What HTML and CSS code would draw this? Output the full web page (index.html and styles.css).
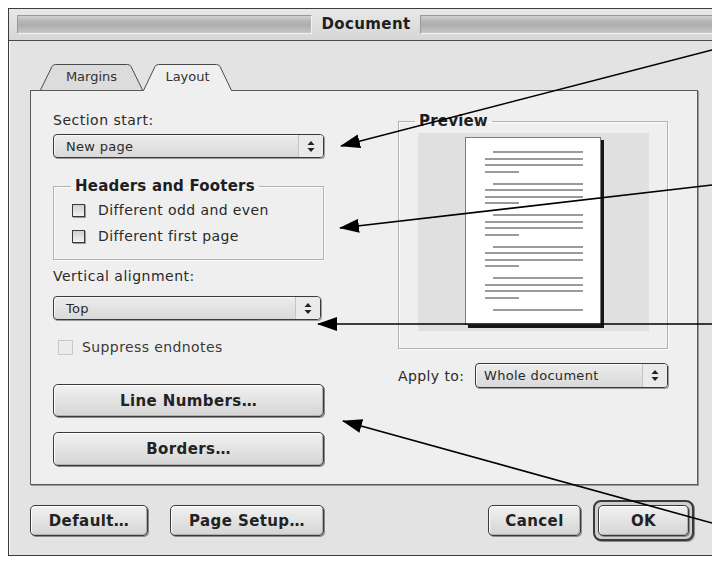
FILE: index.html
```html
<!DOCTYPE html>
<html>
<head>
<meta charset="utf-8">
<link rel="stylesheet" href="styles.css">
</head>
<body>
<div class="window">
  <div class="titlebar">
    <div class="stripes"></div>
    <div class="title">Document</div>
    <div class="stripes"></div>
  </div>
  <div class="content">
    <div class="tabs">
      <div class="tab tab-back">
        <svg class="tab-shape" width="103" height="27" viewBox="0 0 103 27">
          <path d="M0.5,26 L12,2.5 Q13,0.5 15.5,0.5 L87.5,0.5 Q90,0.5 91,2.5 L102.5,26 Z" fill="#dcdcdc"/>
          <path d="M0.5,26 L12,2.5 Q13,0.5 15.5,0.5 L87.5,0.5 Q90,0.5 91,2.5 L102.5,26" fill="none" stroke="#4a4a4a" stroke-width="1"/>
        </svg>
        <span class="tab-label">Margins</span>
      </div>
      <div class="tab tab-front">
        <svg class="tab-shape" width="89" height="27" viewBox="0 0 89 27">
          <path d="M0.5,27 L12,2.5 Q13,0.5 15.5,0.5 L73.5,0.5 Q76,0.5 77,2.5 L88.5,27 Z" fill="#efefef"/>
          <path d="M0.5,26.5 L12,2.5 Q13,0.5 15.5,0.5 L73.5,0.5 Q76,0.5 77,2.5 L88.5,26.5" fill="none" stroke="#4a4a4a" stroke-width="1"/>
        </svg>
        <span class="tab-label">Layout</span>
      </div>
    </div>
    <div class="panel">
      <div class="col-left">
        <div class="label">Section start:</div>
        <div class="popup popup-section">
          <span class="val">New page</span>
          <span class="arrows"><svg width="8" height="11" viewBox="0 0 8 11"><path d="M4,0 L7.5,4 L0.5,4 Z M4,11 L7.5,7 L0.5,7 Z" fill="#222"/></svg></span>
        </div>
        <fieldset class="group">
          <legend>Headers and Footers</legend>
          <div class="check"><span class="box"></span><span>Different odd and even</span></div>
          <div class="check second"><span class="box"></span><span>Different first page</span></div>
        </fieldset>
        <div class="label label-valign">Vertical alignment:</div>
        <div class="popup popup-valign">
          <span class="val">Top</span>
          <span class="arrows"><svg width="8" height="11" viewBox="0 0 8 11"><path d="M4,0 L7.5,4 L0.5,4 Z M4,11 L7.5,7 L0.5,7 Z" fill="#222"/></svg></span>
        </div>
        <div class="check disabled"><span class="box"></span><span>Suppress endnotes</span></div>
        <button class="btn btn-wide btn-line">Line Numbers…</button>
        <button class="btn btn-wide btn-borders">Borders…</button>
      </div>
      <div class="col-right">
        <fieldset class="preview">
          <legend>Preview</legend>
          <div class="preview-area">
            <div class="page">
              <div class="para"><i class="ln ind"></i><i class="ln"></i><i class="ln"></i><i class="ln short"></i></div>
              <div class="para"><i class="ln ind"></i><i class="ln"></i><i class="ln"></i><i class="ln short"></i></div>
              <div class="para"><i class="ln ind"></i><i class="ln"></i><i class="ln"></i><i class="ln short"></i></div>
              <div class="para"><i class="ln ind"></i><i class="ln"></i><i class="ln"></i><i class="ln short"></i></div>
              <div class="para"><i class="ln ind"></i><i class="ln"></i><i class="ln"></i><i class="ln short"></i></div>
              <div class="para"><i class="ln ind"></i></div>
            </div>
          </div>
        </fieldset>
        <div class="apply">
          <span class="apply-label">Apply to:</span>
          <div class="popup popup-apply">
            <span class="val">Whole document</span>
            <span class="arrows"><svg width="8" height="11" viewBox="0 0 8 11"><path d="M4,0 L7.5,4 L0.5,4 Z M4,11 L7.5,7 L0.5,7 Z" fill="#222"/></svg></span>
          </div>
        </div>
      </div>
    </div>
    <div class="footer">
      <button class="btn btn-default">Default…</button>
      <button class="btn btn-setup">Page Setup…</button>
      <div class="spacer"></div>
      <button class="btn btn-cancel">Cancel</button>
      <div class="ok-ring"><button class="btn btn-ok">OK</button></div>
    </div>
  </div>
</div>
<svg class="callouts" width="712" height="561" viewBox="0 0 712 561">
  <defs>
    <marker id="ah" markerUnits="userSpaceOnUse" markerWidth="20" markerHeight="14" refX="19" refY="7" orient="auto">
      <path d="M0,0 L20,7 L0,14 Z" fill="#000"/>
    </marker>
  </defs>
  <g stroke="#000" stroke-width="1.6" fill="none">
    <path d="M712,50 L341,146" marker-end="url(#ah)"/>
    <path d="M712,185 L340,228" marker-end="url(#ah)"/>
    <path d="M712,324 L318,324" marker-end="url(#ah)"/>
    <path d="M712,523 L343,421" marker-end="url(#ah)"/>
  </g>
</svg>
</body>
</html>
```

FILE: styles.css
```css
html, body {
  margin: 0;
  background: #ffffff;
}
body {
  width: 712px;
  height: 561px;
  box-sizing: border-box;
  padding: 8px 0 0 8px;
  position: relative;
  overflow: hidden;
  font-family: "DejaVu Sans", "Liberation Sans", sans-serif;
  color: #222;
}
.window {
  width: 716px;
  height: 548px;
  box-sizing: border-box;
  border: 1px solid #3c3c3c;
  background: #e3e3e3;
  box-shadow: inset 1px 1px 0 #f6f6f6;
}
.titlebar {
  height: 32px;
  box-sizing: border-box;
  border-bottom: 1px solid #4a4a4a;
  background: linear-gradient(#e8e8e8, #d6d6d6);
  display: flex;
  align-items: center;
  padding: 0 8px;
}
.stripes {
  flex: 1;
  height: 19px;
  box-sizing: border-box;
  border: 1px solid;
  border-color: #9a9a9a #f2f2f2 #f2f2f2 #9a9a9a;
  background: linear-gradient(#cfcfcf, #b3b3b3 35%, #aeaeae 55%, #c6c6c6);
}
.title {
  padding: 0 9px;
  font-weight: bold;
  font-size: 15px;
  letter-spacing: 0.4px;
  color: #1e1e1e;
  line-height: 19px;
}
.content {
  padding: 23px 0 0 21px;
}
.tabs {
  display: flex;
  height: 27px;
  margin-left: 10px;
  position: relative;
  z-index: 1;
}
.tab {
  position: relative;
  height: 27px;
  display: flex;
  align-items: center;
  justify-content: center;
}
.tab-shape {
  position: absolute;
  left: 0;
  top: 0;
  overflow: visible;
}
.tab-back { width: 103px; }
.tab-front { width: 89px; }
.tab-label {
  position: relative;
  font-size: 13px;
  color: #333;
  padding-bottom: 2px;
}
.panel {
  width: 668px;
  height: 395px;
  margin-top: -1px;
  box-sizing: border-box;
  border: 1px solid #5a5a5a;
  box-shadow: 1px 1px 0 #9a9a9a;
  background: #efefef;
  display: flex;
  gap: 74px;
  padding: 21px 0 0 22px;
}
.col-left {
  width: 271px;
  display: flex;
  flex-direction: column;
}
.col-right {
  width: 270px;
  display: flex;
  flex-direction: column;
}
.label {
  font-size: 14px;
  line-height: 16px;
  letter-spacing: 0.5px;
  color: #2a2a2a;
}
.popup {
  display: flex;
  align-items: stretch;
  height: 24px;
  box-sizing: border-box;
  border: 1px solid #3a3a3a;
  border-radius: 4px;
  background: linear-gradient(#ececec, #d9d9d9);
  box-shadow: 1px 1px 0 #9c9c9c, inset 1px 1px 0 #fafafa;
  font-size: 13px;
  letter-spacing: 0.3px;
  color: #2a2a2a;
}
.popup .val {
  flex: 1;
  display: flex;
  align-items: center;
  padding-left: 12px;
}
.popup .arrows {
  width: 24px;
  display: flex;
  align-items: center;
  justify-content: center;
  border-left: 1px solid #c4c4c4;
  background: #eaeaea;
  border-radius: 0 3px 3px 0;
}
.popup-section { margin-top: 6px; }
.popup-valign { margin-top: 12px; width: 268px; }
.group {
  margin: 19px 0 0 0;
  padding: 7px 0 15px 18px;
  border: 1px solid #b2b2b2;
  box-shadow: 1px 1px 0 #fbfbfb, inset 1px 1px 0 #fbfbfb;
  min-width: 0;
}
.group legend, .preview legend {
  font-weight: bold;
  font-size: 15px;
  line-height: 18px;
  letter-spacing: 0.2px;
  padding: 0 4px;
  margin-left: -1px;
  color: #1e1e1e;
}
.check {
  display: flex;
  align-items: center;
  height: 16px;
  font-size: 14px;
  letter-spacing: 0.4px;
  color: #2a2a2a;
}
.check .box {
  width: 13px;
  height: 13px;
  box-sizing: border-box;
  border: 1px solid #3a3a3a;
  background: linear-gradient(#d0d0d0, #f2f2f2);
  box-shadow: 1px 1px 0 #9a9a9a;
  margin-right: 13px;
}
.check.second { margin-top: 10px; }
.check.disabled {
  margin-top: 19px;
  padding-left: 5px;
  color: #3a3a3a;
}
.check.disabled .box {
  width: 15px;
  height: 15px;
  border-color: #c8c8c8;
  background: #ececec;
  box-shadow: none;
  margin-right: 9px;
}
.label-valign { margin-top: 8px; }
.btn {
  box-sizing: border-box;
  border: 1px solid #3a3a3a;
  border-radius: 5px;
  background: linear-gradient(#f1f1f1, #d5d5d5);
  box-shadow: inset 1px 1px 0 #ffffff, inset -1px -1px 0 #b0b0b0, 1px 1px 0 #8a8a8a;
  font-family: "DejaVu Sans", sans-serif;
  font-weight: bold;
  font-size: 15px;
  letter-spacing: 0.4px;
  color: #222;
  padding: 0;
}
.btn-wide {
  width: 271px;
  height: 33px;
}
.btn-line { margin-top: 29px; }
.btn-borders { margin-top: 15px; height: 34px; }
.preview {
  margin: 0;
  padding: 3px 0 17px 19px;
  border: 1px solid #b2b2b2;
  box-shadow: 1px 1px 0 #fbfbfb, inset 1px 1px 0 #fbfbfb;
  min-width: 0;
}
.preview legend {
  margin-left: -3px;
}
.preview-area {
  width: 231px;
  height: 198px;
  background: #e0e0e0;
  padding: 4px 0 0 47px;
  box-sizing: border-box;
}
.page {
  width: 136px;
  height: 188px;
  box-sizing: border-box;
  background: #ffffff;
  border: 1px solid #7a7a7a;
  box-shadow: 3px 3px 0 #161616;
  padding: 13px 0 0 19px;
  display: flex;
  flex-direction: column;
  gap: 10px;
}
.para {
  display: flex;
  flex-direction: column;
  gap: 4.5px;
}
.ln {
  display: block;
  width: 98px;
  height: 2px;
  background: #9a9a9a;
}
.ln.ind {
  width: 90px;
  margin-left: 8px;
}
.ln.short { width: 34px; }
.apply {
  display: flex;
  align-items: center;
  margin-top: 14px;
}
.apply-label {
  font-size: 14px;
  letter-spacing: 0.4px;
  color: #2a2a2a;
  width: 77px;
}
.popup-apply {
  width: 193px;
  height: 25px;
}
.popup-apply .val { padding-left: 8px; }
.footer {
  display: flex;
  align-items: center;
  width: 664px;
  margin-top: 15px;
}
.btn-default { width: 118px; height: 31px; }
.btn-setup { width: 154px; height: 31px; margin-left: 22px; }
.spacer { flex: 1; }
.btn-cancel { width: 93px; height: 31px; }
.ok-ring {
  margin-left: 12px;
  padding: 3px;
  border: 2px solid #3a3a3a;
  border-radius: 8px;
  background: #cfcfcf;
  box-shadow: 1px 1px 0 #8a8a8a;
}
.btn-ok { width: 91px; height: 31px; display: block; }
.callouts {
  position: absolute;
  left: 0;
  top: 0;
  pointer-events: none;
}
```
